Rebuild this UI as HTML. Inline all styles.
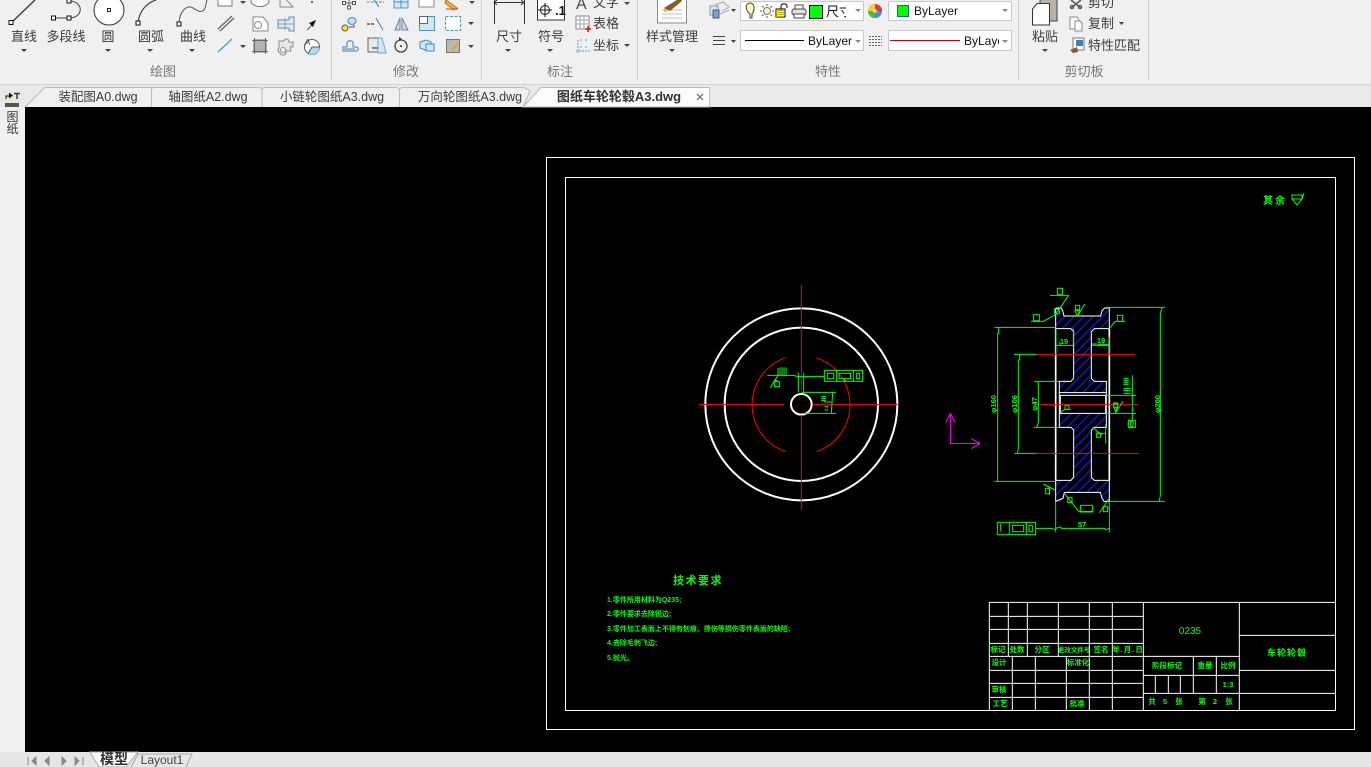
<!DOCTYPE html>
<html lang="zh"><head><meta charset="utf-8"><title>CAD</title>
<style>
html,body{margin:0;padding:0;width:1371px;height:767px;overflow:hidden;background:#f0f0f0}
svg{display:block}
text{font-family:"Liberation Sans","Noto Sans CJK SC",sans-serif}
.r{font-size:13px;fill:#3c3c3c;text-anchor:middle}
.rl{font-size:13px;fill:#3c3c3c}
.g{font-size:13px;fill:#777;text-anchor:middle}
.tb{font-size:12.5px;fill:#3c3c3c;text-anchor:middle}
.c{font-size:12px;fill:#111}
.d{font-size:7.5px;fill:#0f0;text-anchor:middle;font-weight:bold}
.dl{font-size:7px;fill:#0f0;font-weight:bold}
.w{fill:none;stroke:#fff}
.gr{fill:none;stroke:#0f0;stroke-width:1}
</style></head><body>
<svg width="1371" height="767" viewBox="0 0 1371 767" xmlns="http://www.w3.org/2000/svg">
<defs>
<pattern id="h" width="20" height="20" patternUnits="userSpaceOnUse" patternTransform="rotate(45)"><rect x="0" y="0" width="4" height="20" fill="#1414e6"/></pattern>
</defs>
<!-- backgrounds -->
<rect width="1371" height="84" fill="#f0f0f0"/>
<rect y="84" width="1371" height="23" fill="#e9e9e9"/>
<rect y="84" width="1371" height="1" fill="#d4d4d4"/>
<rect y="107" width="25" height="645" fill="#f0f0f0"/>
<rect x="25" y="107" width="1346" height="645" fill="#000"/>
<rect y="752" width="1371" height="15" fill="#e6e6e6"/>

<!-- separators -->
<g stroke="#d0d0d0"><path d="M331.500 0V80M481.500 0V80M637.500 0V80M1018.500 0V80M1148.500 0V80"/></g>

<!-- draw group -->
<path d="M11 23L35 0" stroke="#444" stroke-width="1.500"/>
<rect x="9" y="20.500" width="4" height="4" fill="#fff" stroke="#111"/>
<path d="M53 18H69M69 1C84 1 84 18 69 18" fill="none" stroke="#444"/>
<rect x="51.500" y="16" width="4" height="4" fill="#fff" stroke="#111"/><rect x="67" y="16" width="4" height="4" fill="#fff" stroke="#111"/><rect x="67" y="-1" width="4" height="4" fill="#fff" stroke="#111"/>
<circle cx="109" cy="10" r="15" fill="#fff" stroke="#333"/><rect x="107.500" y="8.500" width="3" height="3" fill="#fff" stroke="#222"/>
<path d="M138 23C139 12 146 3 156 0" fill="none" stroke="#444" stroke-width="1.200"/><rect x="136" y="21" width="4" height="4" fill="#fff" stroke="#111"/>
<path d="M179 24C179 12 186 6 191 7C196 9 200 14 204 10C206 7 206 3 207 0" fill="none" stroke="#555"/><rect x="177" y="22" width="4" height="4" fill="#fff" stroke="#111"/>
<text x="24" y="41" class="r">直线</text><text x="66" y="41" class="r">多段线</text><text x="108" y="41" class="r">圆</text><text x="151" y="41" class="r">圆弧</text><text x="193" y="41" class="r">曲线</text>
<g fill="#444"><path d="M21 49h6l-3 3zM105 49h6l-3 3zM147 49h6l-3 3zM189 49h6l-3 3z"/></g>
<text x="163" y="76" class="g">绘图</text>
<!-- small draw tools -->
<rect x="218" y="-6" width="14" height="12" fill="#fff" stroke="#777"/><path d="M240 1h6l-3 3z" fill="#444"/>
<ellipse cx="260" cy="1" rx="9" ry="5.500" fill="#fff" stroke="#777"/>
<path d="M280 7V-2M280 7H293L285 -2" fill="none" stroke="#888"/><rect x="311" y="1" width="2" height="2" fill="#666"/>
<path d="M218 29L232 16M220 31L234 18" stroke="#666" stroke-width="1.300"/>
<path d="M253 17H263L268 23V31H253Z" fill="#fff" stroke="#888"/><circle cx="258" cy="25" r="3.500" fill="none" stroke="#888"/>
<path d="M278 20H289V17H294V31H289V28H278Z" fill="#dbe8f3" stroke="#6d8aa8"/><path d="M278 24H294M285 18V30" stroke="#8aa" fill="none"/>
<path d="M307 30L314 23" stroke="#555"/><path d="M316 20L309 23L313 27Z" fill="#111"/>
<path d="M218 52L232 39" stroke="#2ea3ea" stroke-width="1.200"/><path d="M240 45h6l-3 3z" fill="#444"/>
<rect x="254" y="40" width="12" height="12" fill="#b4b4b4" stroke="#777"/><path d="M252 40.500h16M252 51.500h16M254.500 38v16M265.500 38v16" stroke="#666" fill="none"/>
<path d="M279 41h5l1-2h3l1 3h4v5h-3l1 4h-5a3 3 0 0 1-6 2a3 3 0 0 1-1-5z" fill="#e6e6e6" stroke="#8a8f94"/><circle cx="283" cy="50" r="2.500" fill="#fff" stroke="#8a8f94"/>
<circle cx="312" cy="47" r="7.500" fill="#fff" stroke="#555"/><path d="M312 47H319.500A7.500 7.500 0 0 1 308 53.500Z" fill="#a8dcf7"/><path d="M312 47H319.500M312 47L308 53.500" stroke="#555"/><text x="305" y="45" font-size="8" fill="#333">A</text>

<!-- modify group -->
<path d="M344 3h10M349 -2v10" stroke="#666"/><g fill="#fff" stroke="#555"><rect x="342.500" y="1.500" width="3" height="3"/><rect x="352.500" y="1.500" width="3" height="3"/><rect x="347.500" y="6" width="3" height="3"/></g>
<path d="M367 2H384" stroke="#888" stroke-dasharray="3 1"/><path d="M372 -3L379 7" stroke="#2f80c8"/>
<rect x="394" y="-5" width="14" height="13" fill="#cfe8f8" stroke="#4f93c5"/><path d="M394 2H408M401 -5V8" stroke="#4f93c5"/>
<rect x="419" y="-5" width="15" height="12" fill="#fff" stroke="#888"/>
<path d="M446 0L457 8L454 10L445 3Z" fill="#f0b63c" stroke="#b37a18"/><path d="M446 9H458" stroke="#d33"/><path d="M469 1h6l-3 3z" fill="#444"/>
<circle cx="345" cy="28" r="3" fill="#ffe61a" stroke="#555"/><ellipse cx="352" cy="21" rx="4" ry="3.500" fill="#bfe0f7" stroke="#3a8dc8"/><path d="M349 27h5v-2" fill="none" stroke="#a33"/>
<path d="M367 24h7" stroke="#555" stroke-width="1.500" stroke-dasharray="3 1"/><path d="M376 18L383 30" stroke="#2f80c8"/>
<path d="M400 18V30H395ZM402 18V30H408Z" fill="#cfd9e2" stroke="#6d8aa8"/>
<rect x="419.500" y="16.500" width="15" height="14" fill="#cfe8f8" stroke="#4f93c5"/><rect x="419.500" y="16.500" width="8" height="7" fill="#fff" stroke="#666"/>
<rect x="445.500" y="16.500" width="15" height="14" fill="#fff" stroke="#4f93c5" stroke-dasharray="3 1.500"/><path d="M468 22h6l-3 3z" fill="#444"/>
<path d="M342 47h5v-4c0-3 6-3 6 0v4h3c3 0 3 4 0 4H342M342 49h13" fill="none" stroke="#4a7da6"/>
<path d="M368 38H378V52H368Z" fill="#e8e8e8" stroke="#666"/><path d="M378 38H382L386 53H378Z" fill="#cfe8f8" stroke="#6aa9d6"/><path d="M372 48h6" stroke="#222"/>
<circle cx="401" cy="46" r="6" fill="none" stroke="#444" stroke-width="1.300"/><circle cx="401" cy="46" r="1" fill="#333"/><path d="M399 37l3 2-3 2z" fill="#333"/>
<path d="M420 42l6-2 5 2v8h-6l-5-2z" fill="#cfe8f8" stroke="#3c8bc2"/><rect x="426" y="44" width="8" height="7" fill="#cfe8f8" stroke="#3c8bc2"/>
<rect x="446.500" y="39.500" width="13" height="13" fill="#b8b8b8" stroke="#777"/><path d="M452 50L459 43" stroke="#e0a030" stroke-width="2"/><path d="M468 45h6l-3 3z" fill="#444"/>
<text x="406" y="76" class="g">修改</text>

<!-- annotation -->
<path d="M494.500 0V24M524.500 0V24M494 2.500H524" fill="none" stroke="#333"/><path d="M497 0l-3 2.500 3 2.500M521 0l3 2.500-3 2.500" fill="none" stroke="#333"/>
<rect x="537.500" y="-2" width="27" height="22" fill="#fff" stroke="#333"/><circle cx="545" cy="10" r="4.500" fill="none" stroke="#111"/><path d="M538 10H552M545 3V17" stroke="#111"/><text x="555" y="15" font-size="13" font-weight="bold" fill="#111">.1</text>
<text x="509" y="41" class="r">尺寸</text><text x="551" y="41" class="r">符号</text>
<path d="M505 49h6l-3 3zM547 49h6l-3 3z" fill="#444"/>
<text x="576" y="9" font-size="16" fill="#444">A</text><text x="593" y="7" class="rl">文字</text><path d="M624 2h6l-3 3z" fill="#444"/>
<rect x="576" y="16" width="13" height="13" fill="#fff" stroke="#888"/><path d="M576 20H589M576 24H589M580 16V29M584 16V29" stroke="#aaa"/><path d="M585 29h6M588 26v6" stroke="#d11" stroke-width="1.500"/><text x="593" y="28" class="rl">表格</text>
<path d="M578 40V53M576 51H590M581 39v3M586 39v3M581 46v3M586 46v3" stroke="#6d9dc5" stroke-dasharray="2 1" fill="none"/><text x="593" y="50" class="rl">坐标</text><path d="M624 44h6l-3 3z" fill="#444"/>
<text x="560" y="76" class="g">标注</text>

<!-- style -->
<path d="M657.500 -2H686.500V23H657.500Z" fill="#fff" stroke="#8a8a8a"/><path d="M662 10H682M662 14H682M662 18H682" stroke="#a8c4dc"/><path d="M664 8L680 -2L682 1L670 11Z" fill="#8a5a2b"/><path d="M664 8L668 11L664 12Z" fill="#f0b040"/>
<text x="672" y="41" class="r">样式管理</text><path d="M669 49h6l-3 3z" fill="#444"/>

<!-- properties -->
<g transform="translate(710,3)"><rect x="0" y="3" width="8" height="9" fill="#dde6ee" stroke="#8a9aa8"/><rect x="3" y="7" width="6" height="8" fill="#6ea4d6" stroke="#557"/><path d="M5 2L13 -1L19 4L12 8M10 11L19 7" fill="none" stroke="#aaa"/></g>
<path d="M731 9h5l-2.500 3z" fill="#444"/>
<rect x="740.500" y="1.500" width="123" height="19" fill="#fff" stroke="#c8c8c8"/>
<path d="M750 14C745 10 745 3 750 3C755 3 755 10 752 14V18H750Z" fill="#fff5b0" stroke="#444"/>
<circle cx="767" cy="11" r="3.500" fill="#fff5c8" stroke="#777"/><path d="M767 4v2M767 16v2M760 11h2M772 11h2M762 6l1.500 1.500M772 6l-1.500 1.500M762 16l1.500-1.500M772 16l-1.500-1.500" stroke="#555"/>
<path d="M776 9h9v8h-9zM781 9V6c0-3 6-3 6 0v2" fill="none" stroke="#000"/><path d="M776 10.500h8M776 12.500h8M776 14.500h8M776 16.500h8" stroke="#c8a800"/>
<rect x="792" y="9" width="14" height="6" rx="2" fill="#e0e0e0" stroke="#444"/><rect x="795" y="5" width="8" height="4" fill="#fff" stroke="#444"/><rect x="794" y="14" width="10" height="4" fill="#fff" stroke="#444"/>
<rect x="809.500" y="5.500" width="13" height="13" fill="#00ff00" stroke="#000"/>
<svg x="825" y="2" width="21" height="18"><text x="1" y="14" font-size="13" fill="#111">尺寸</text></svg>
<path d="M855 9h6l-3 3z" fill="#888"/>
<path d="M713 36.500h12M713 40.500h12M713 44.500h12" stroke="#444"/><path d="M731 40h5l-2.500 3z" fill="#444"/>
<rect x="740.500" y="30.500" width="123" height="20" fill="#fff" stroke="#c8c8c8"/><path d="M745 40.500H804" stroke="#000"/>
<text x="808" y="45" class="c">ByLayer</text><path d="M855 40h6l-3 3z" fill="#888"/>
<circle cx="875" cy="11" r="7" fill="#d84"/><path d="M875 11V4A7 7 0 0 1 882 11Z" fill="#e33"/><path d="M875 11H882A7 7 0 0 1 875 18Z" fill="#39c"/><path d="M875 11V18A7 7 0 0 1 868 11Z" fill="#4b4"/><path d="M875 11H868A7 7 0 0 1 875 4Z" fill="#fc3"/><circle cx="875" cy="11" r="2" fill="#fff" opacity=".6"/>
<rect x="888.500" y="1.500" width="123" height="19" fill="#fff" stroke="#c8c8c8"/><rect x="897.500" y="5.500" width="11" height="11" fill="#00ff00" stroke="#1a5ea8"/><text x="914" y="15" class="c">ByLayer</text><path d="M1002 9h6l-3 3z" fill="#888"/>
<path d="M869 36.500h13M869 39.500h13M869 42.500h13M869 45.500h13" stroke="#666" stroke-dasharray="2 1"/>
<rect x="888.500" y="30.500" width="123" height="20" fill="#fff" stroke="#c8c8c8"/><path d="M890 40.500H960" stroke="#c00"/>
<svg x="964" y="32" width="35" height="18"><text x="0" y="13" class="c">ByLayer</text></svg><path d="M1002 40h6l-3 3z" fill="#888"/>
<text x="828" y="76" class="g">特性</text>

<!-- clipboard -->
<rect x="1040" y="-3" width="17" height="24" fill="#b9b2a6" stroke="#444"/>
<path d="M1032.500 9L1037 3.500H1049.500V25H1032.500Z" fill="#fff" stroke="#333"/>
<text x="1045" y="41" class="r">粘贴</text><path d="M1042 49h6l-3 3z" fill="#444"/>
<path d="M1071 0L1081 8M1081 0L1071 8" stroke="#555" stroke-width="1.500"/><circle cx="1072" cy="7" r="1.800" fill="none" stroke="#555"/><circle cx="1080" cy="7" r="1.800" fill="none" stroke="#555"/>
<text x="1088" y="7" class="rl">剪切</text>
<path d="M1070 17h7l2 3v9h-9z" fill="#fff" stroke="#888"/><path d="M1075 21h5l2 2v8h-7z" fill="#fff" stroke="#888"/>
<text x="1088" y="28" class="rl">复制</text><path d="M1119 22h5l-2.500 3z" fill="#444"/>
<rect x="1073" y="38" width="11" height="12" fill="#fff" stroke="#777"/><rect x="1076" y="40" width="7" height="6" fill="#3f7fb8"/><path d="M1070 50L1077 47L1078 52L1073 53Z" fill="#8a5a2b"/>
<text x="1088" y="50" class="rl">特性匹配</text>
<text x="1084" y="76" class="g">剪切板</text>

<!-- tabs -->
<g fill="#f0f0f0" stroke="#bdbdbd">
<path d="M25 107L45 87.500H151.500V107" />
<path d="M151.500 107V89L153 87.500H260L262 89.500V107"/>
<path d="M262 107V89L264 87.500H397L399.500 89.500V107"/>
<path d="M399.500 107V89L402 87.500H524L530 91L523 107"/>
</g>
<path d="M523 107L541 87.500H709.500V107Z" fill="#fbfbfb" stroke="#bdbdbd"/>
<text x="98" y="101" class="tb">装配图A0.dwg</text>
<text x="208" y="101" class="tb">轴图纸A2.dwg</text>
<text x="332" y="101" class="tb">小链轮图纸A3.dwg</text>
<text x="470" y="101" class="tb">万向轮图纸A3.dwg</text>
<text x="619" y="101" style="font-size:13px;font-weight:bold;fill:#333;text-anchor:middle">图纸车轮轮毂A3.dwg</text>
<path d="M697 94L703 100M703 94L697 100" stroke="#777" stroke-width="1.300"/>

<!-- left strip -->
<rect x="5" y="93" width="15" height="10" fill="#e8e8d8"/>
<path d="M6 99V96h4" stroke="#111" fill="none"/><path d="M9 92.500l4 3-4 3z" fill="#111"/><path d="M14 93.500h6M17 93v6" stroke="#333" stroke-width="1.500"/>
<rect x="5" y="103" width="14" height="4" fill="#555"/>
<text x="12.500" y="121" font-size="12" fill="#333" text-anchor="middle">图</text>
<text x="12.500" y="133" font-size="12" fill="#333" text-anchor="middle">纸</text>

<!-- bottom bar -->
<path d="M28 757V765M36 757L32 761L36 765ZM45 761L49 757V765ZM66 761L62 757V765ZM79 761L75 757V765ZM83 757V765" fill="#888" stroke="#888"/>
<path d="M90 752L99 767H126L138 752Z" fill="#fff" stroke="#aaa"/>
<text x="114" y="764" font-size="14" fill="#333" text-anchor="middle" font-weight="bold">模型</text>
<path d="M131 767L138 754H192L186 767" fill="#e6e6e6" stroke="#aaa"/>
<text x="162" y="764" font-size="12" fill="#444" text-anchor="middle">Layout1</text>

<!-- drawing frames -->
<rect x="546.500" y="157.500" width="808" height="572" class="w"/>
<rect x="565.500" y="177.500" width="770" height="533" class="w"/>

<!-- top right roughness -->
<text x="1275" y="204" style="font-size:10px;fill:#0f0;text-anchor:middle;font-weight:bold" letter-spacing="2">其余</text>
<path d="M1292 195H1302V199H1292ZM1292 199L1297 205L1302 199M1302 199L1304 193" class="gr"/>

<!-- front view -->
<g transform="translate(690,280) scale(.33333)">
<circle cx="334" cy="373" r="288" class="w" stroke-width="6"/>
<circle cx="334" cy="373" r="230" class="w" stroke-width="6"/>
<circle cx="334" cy="373" r="31" class="w" stroke-width="6"/>
<path d="M287 233A149 149 0 0 0 287 515M379 233A149 149 0 0 1 379 515" fill="none" stroke="#f00" stroke-width="3"/>
<path d="M27 373H282M368 373H624M334 15V330M334 405V690" stroke="#f00" stroke-width="3" fill="none"/>
<circle cx="325" cy="373" r="1.500" fill="#f00"/>
<g fill="none" stroke="#0f0" stroke-width="3">
<path d="M232 286H310L324 290H403"/><path d="M325 278V337M341 278V337"/><path d="M264 264V286M270 262V286M276 262V286M282 262V286M288 262V286" stroke-width="3"/>
<path d="M252 304L241 323M264 286L252 304L262 300"/><rect x="253" y="305" width="16" height="15"/>
<rect x="403" y="271" width="115" height="33"/><path d="M440 271V304M490 271V304"/><rect x="412" y="280" width="19" height="16"/><rect x="447" y="280" width="35" height="16"/><rect x="499" y="280" width="10" height="16"/>
<path d="M470 304L458 296"/>
<path d="M334 337H438M428 337L424 400M334 400H438"/>
<path d="M393 350H408M393 356H408M393 362H408M402 366H424M404 380H415M404 390H414" />
</g>
</g>

<!-- section view -->
<g transform="translate(940,280) scale(.33333)">
<path d="M347 84L365 84L372 108L482 108L490 84L508 84L508 146L462 146L454 154L454 295L463 304L499 304L499 338L358 338L358 304L393 304L401 295L401 152L395 146L347 146Z" fill="url(#h)"/>
<path d="M358 400L499 400L499 442L463 442L454 452L454 592L463 601L508 601L508 664L490 664L482 637L372 637L365 664L347 664L347 601L393 601L401 592L401 450L393 442L358 442Z" fill="url(#h)"/>
<g fill="none" stroke="#fff" stroke-width="3">
<path d="M347 84H364L368 92L372 108H482L486 92L494 84H508V664H492L486 655L481 637H373L369 655L347 664V84" />
<path d="M347 146H392L401 154V295L393 304H358V442H393L401 450V592L393 601H347" />
<path d="M508 146H463L454 155V295L463 304H499V442H463L454 451V592L463 601H508"/>
<path d="M358 338H499M361 346H497V400H361Z"/>
</g>
<path d="M347 146V600M508 146V600" stroke="#fff" stroke-width="5"/>
<g fill="none" stroke="#f00" stroke-width="3"><path d="M290 223H585M290 520H597M285 373H594"/></g>
<g fill="none" stroke="#0f0" stroke-width="3">
<path d="M163 142H347M163 604H347M176 142V160H173V604"/>
<path d="M222 223H290M222 520H290M239 223V240H235V505L232 520"/>
<path d="M282 304H358M282 442H358M295 304V427L290 442"/>
<path d="M497 82H675M508 664H675M666 84L661 100V645L658 664"/>
<path d="M347 664V757M508 664V757M347 745L362 741L364 745H494L497 749L508 745"/>
<path d="M348 196H400M362 196L358 186M400 146V196M348 146V222M456 196H508M472 194H508M508 170V222M470 192H456"/>
<path d="M273 124H310L346 104L386 46H330"/><rect x="280" y="104" width="18" height="18"/><rect x="352" y="25" width="16" height="18"/><rect x="343" y="87" width="15" height="14"/>
<path d="M404 92H418L413 108L404 92M434 72L413 108"/><rect x="406" y="76" width="13" height="13"/>
<path d="M508 146L525 124H555"/><rect x="532" y="106" width="16" height="18"/>
<path d="M550 295H566M550 301H566M550 307H566M550 313H566M550 325H572M550 332H572M550 340H572"/>
<path d="M577 286V398M497 346H588M497 400H588"/><rect x="565" y="421" width="21" height="22"/><rect x="571" y="425" width="8" height="14"/><path d="M577 400V421"/>
<path d="M520 372H534L527 398L520 372M549 364L527 398"/><rect x="521" y="369" width="12" height="14"/>
<rect x="375" y="376" width="12" height="12"/><path d="M362 398L374 388H392"/>
<path d="M497 432V490M458 442L486 466M470 460H497"/><rect x="470" y="459" width="11" height="13"/>
<path d="M310 612L345 630M328 622V645"/><rect x="316" y="625" width="13" height="16"/>
<path d="M373 640L416 694H460"/><rect x="383" y="652" width="13" height="16"/><rect x="421" y="676" width="37" height="20"/>
<path d="M478 698L508 655"/><rect x="490" y="680" width="13" height="15"/>
<rect x="172" y="727" width="115" height="37"/><path d="M208 727V764M259 727V764M181 732V754"/><rect x="217" y="736" width="34" height="19"/><rect x="267" y="736" width="10" height="19"/>
<path d="M287 745H330L347 748"/>
</g>
<g fill="none" stroke="#f0f" stroke-width="3"><path d="M31 400V490H120M31 400L17 428M31 400L46 428M120 490L94 476M120 490L94 506M120 490H100"/></g>
</g>
<text x="1064" y="344" class="d">19</text><text x="1101" y="343" class="d">19</text><text x="1082" y="527" class="d">57</text>
<text transform="translate(996,404) rotate(-90)" class="d">φ160</text>
<text transform="translate(1017,404) rotate(-90)" class="d">φ106</text>
<text transform="translate(1037,404) rotate(-90)" class="d">φ47</text>
<text transform="translate(1160,404) rotate(-90)" class="d">φ200</text>

<!-- tech requirements -->
<text x="698" y="584" style="font-size:11px;fill:#0f0;text-anchor:middle;font-weight:bold" letter-spacing="1.500">技术要求</text>
<text x="607" y="602" class="dl">1.零件所用材料为Q235;</text>
<text x="607" y="616" class="dl">2.零件要求去除锐边;</text>
<text x="607" y="631" class="dl">3.零件加工表面上不得有划痕、擦伤等损伤零件表面的缺陷;</text>
<text x="607" y="645" class="dl">4.去除毛刺飞边;</text>
<text x="607" y="660" class="dl">5.抛光。</text>

<!-- title block -->
<g transform="translate(980,595) scale(.33333)" fill="none" stroke="#fff" stroke-width="3">
<path d="M28 22H1067M28 64H490M28 103H490M28 145H490M28 184H778M28 226H490M28 265H490M28 307H490M490 241H778M490 295H1067M778 121H1067M778 226H1067"/>
<path d="M28 22V346M490 22V346M778 22V346M85 22V184M142 22V184M235 22V184M328 22V346M397 22V346M97 184V346M166 184V346M259 184V346M640 184V295M709 184V295M526 241V295M565 241V295M601 241V295"/>
</g>
<g>
<text x="1190" y="634" style="font-size:10px;fill:#0f0;text-anchor:middle">0235</text>
<text x="998" y="652" class="d">标记</text><text x="1017" y="652" class="d">处数</text><text x="1042" y="652" class="d">分区</text><text x="1074" y="652" class="d" style="font-size:6.500px">更改文件号</text><text x="1101" y="652" class="d">签名</text><text x="1128" y="652" class="d" letter-spacing="1">年.月.日</text>
<text x="999" y="665" class="d">设计</text><text x="1078" y="665" class="d">标准化</text><text x="999" y="692" class="d">审核</text><text x="1000" y="706" class="d">工艺</text><text x="1077" y="706" class="d">批准</text>
<text x="1167" y="668" class="d">阶段标记</text><text x="1205" y="668" class="d">重量</text><text x="1228" y="668" class="d">比例</text><text x="1228" y="687" class="d">1:3</text>
<text x="1152" y="704" class="d">共</text><text x="1165" y="704" class="d">5</text><text x="1179" y="704" class="d">张</text><text x="1202" y="704" class="d">第</text><text x="1215" y="704" class="d">2</text><text x="1229" y="704" class="d">张</text>
<text x="1287" y="656" style="font-size:9px;fill:#0f0;text-anchor:middle;font-weight:bold" letter-spacing="1">车轮轮毂</text>
</g>
</svg>
</body></html>
